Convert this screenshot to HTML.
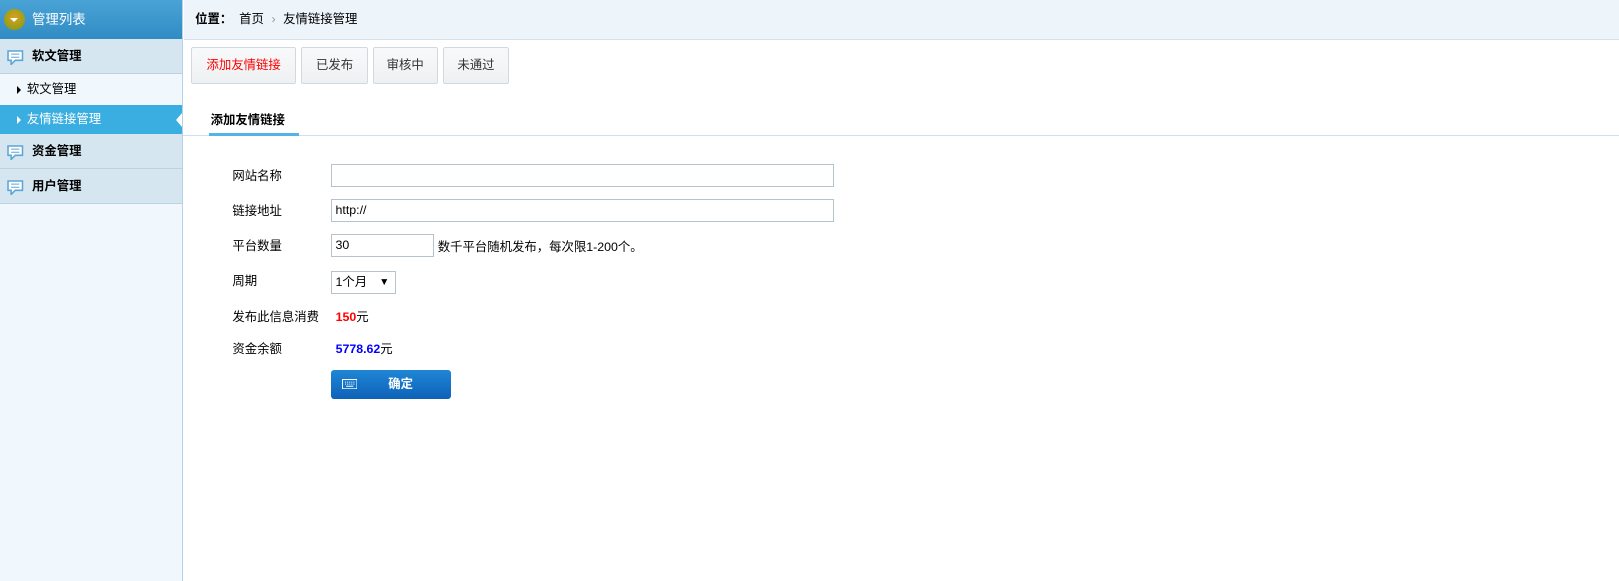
<!DOCTYPE html>
<html><head><meta charset="utf-8"><style>
*{margin:0;padding:0;box-sizing:border-box}
html,body{width:1619px;height:581px;overflow:hidden;background:#fff}
#w{width:1568px;height:563px;zoom:1.0325;position:relative;font-family:"Liberation Sans","Noto Sans CJK SC",sans-serif;font-size:12px;color:#000}
.side{position:absolute;left:0;top:0;width:177px;height:563px;background:#f0f8fd;border-right:1px solid #b4d3e6}
.sh{height:38px;background:linear-gradient(#4aa3d6,#2f8cc4);color:#fff;font-size:13px;line-height:38px;padding-left:31px;position:relative}
.sh i{position:absolute;left:4px;top:9px;width:20px;height:20px;border-radius:50%;background:radial-gradient(circle at 50% 40%,#d8a21d,#7a9a17)}
.sh i:after{content:"";position:absolute;left:6px;top:8px;border:4px solid transparent;border-top:4px solid #fff}
.grp{height:34px;line-height:33px;background:#d5e6f0;border-bottom:1px solid #b9d3e2;font-weight:bold;padding-left:31px;position:relative}
.grp svg{position:absolute;left:7px;top:10px}
.sub{height:30px;line-height:30px;padding-left:26px;position:relative;background:#f0f8fd}
.sub:before{content:"";position:absolute;left:16px;top:11px;border:4px solid transparent;border-left:4px solid #000;border-right:0}
.sub.on{background:#3aaee0;color:#fff;height:28px;line-height:28px}
.sub.on:before{border-left-color:#fff;top:10px}
.sub.on:after{content:"";position:absolute;right:0;top:7px;border:7px solid transparent;border-right:6px solid #fff;border-left:0}
.top{position:absolute;left:178px;top:0;right:0;height:39px;background:#edf5fb;border-bottom:1px solid #d2e1ec;line-height:38px;padding-left:11px}
.btn{position:absolute;top:46px;height:35px;border:1px solid #d2d8dc;background:linear-gradient(#f8f9fa,#eef1f3);border-radius:2px;line-height:33px;text-align:center;color:#333}
.tab{position:absolute;left:204px;top:107px;font-weight:bold}
.tl{position:absolute;left:177px;right:0;top:131px;height:1px;background:#cfe0ea}
.tb{position:absolute;left:202px;top:129px;width:88px;height:3px;background:#53b5e6}
.lb{position:absolute;left:225px}
.in{position:absolute;left:321px;height:22px;border:1px solid #b6c2cc;background:#fff;padding-left:3px;line-height:20px;font-size:12px}
</style></head><body><div id="w">
<div class="side">
<div class="sh"><i></i>管理列表</div>
<div class="grp"><svg width="16" height="15" viewBox="0 0 16 15"><path d="M1 1h14v9H8l-4 4v-4H1z" fill="#fff" stroke="#5aa6d6" stroke-width="1.5"/><path d="M4 4h8M4 7h8" stroke="#5aa6d6"/></svg>软文管理</div>
<div class="sub">软文管理</div>
<div class="sub on">友情链接管理</div>
<div class="grp"><svg width="16" height="15" viewBox="0 0 16 15"><path d="M1 1h14v9H8l-4 4v-4H1z" fill="#fff" stroke="#5aa6d6" stroke-width="1.5"/><path d="M4 4h8M4 7h8" stroke="#5aa6d6"/></svg>资金管理</div>
<div class="grp"><svg width="16" height="15" viewBox="0 0 16 15"><path d="M1 1h14v9H8l-4 4v-4H1z" fill="#fff" stroke="#5aa6d6" stroke-width="1.5"/><path d="M4 4h8M4 7h8" stroke="#5aa6d6"/></svg>用户管理</div>
</div>
<div class="top"><b>位置：</b>&nbsp; 首页 <span style="color:#999;margin:0 4px">›</span> 友情链接管理</div>
<div class="btn" style="left:185px;width:102px;color:#f00">添加友情链接</div>
<div class="btn" style="left:292px;width:64px">已发布</div>
<div class="btn" style="left:361px;width:63px">审核中</div>
<div class="btn" style="left:429px;width:64px">未通过</div>
<div class="tab">添加友情链接</div>
<div class="tl"></div><div class="tb"></div>
<div class="lb" style="top:161px">网站名称</div>
<div class="in" style="top:159px;width:487px"></div>
<div class="lb" style="top:195px">链接地址</div>
<div class="in" style="top:193px;width:487px">http://</div>
<div class="lb" style="top:229px">平台数量</div>
<div class="in" style="top:227px;width:99px">30</div>
<div style="position:absolute;left:424px;top:230px">数千平台随机发布，每次限1-200个。</div>
<div class="lb" style="top:262px">周期</div>
<div class="in" style="top:262px;width:63px;height:23px;line-height:21px">1个月<span style="position:absolute;right:6px;font-size:10px">▼</span></div>
<div class="lb" style="top:297px">发布此信息消费</div>
<div style="position:absolute;left:325px;top:297px"><b style="color:#f00">150</b>元</div>
<div class="lb" style="top:328px">资金余额</div>
<div style="position:absolute;left:325px;top:328px"><b style="color:#00f">5778.62</b>元</div>
<div style="position:absolute;left:321px;top:358px;width:116px;height:28px;border-radius:3px;background:linear-gradient(#1f86d6,#0d62b8);color:#fff;font-weight:bold;line-height:28px;text-align:center;padding-left:18px">确定
<svg style="position:absolute;left:10px;top:9px" width="15" height="10"><rect x=".5" y=".5" width="14" height="9" fill="none" stroke="#fff"/><path d="M3 3h1M5 3h1M7 3h1M9 3h1M11 3h1M3 5h1M5 5h1M7 5h1M9 5h1M11 5h1M4 7h7" stroke="#fff"/></svg></div>
</div></body></html>
